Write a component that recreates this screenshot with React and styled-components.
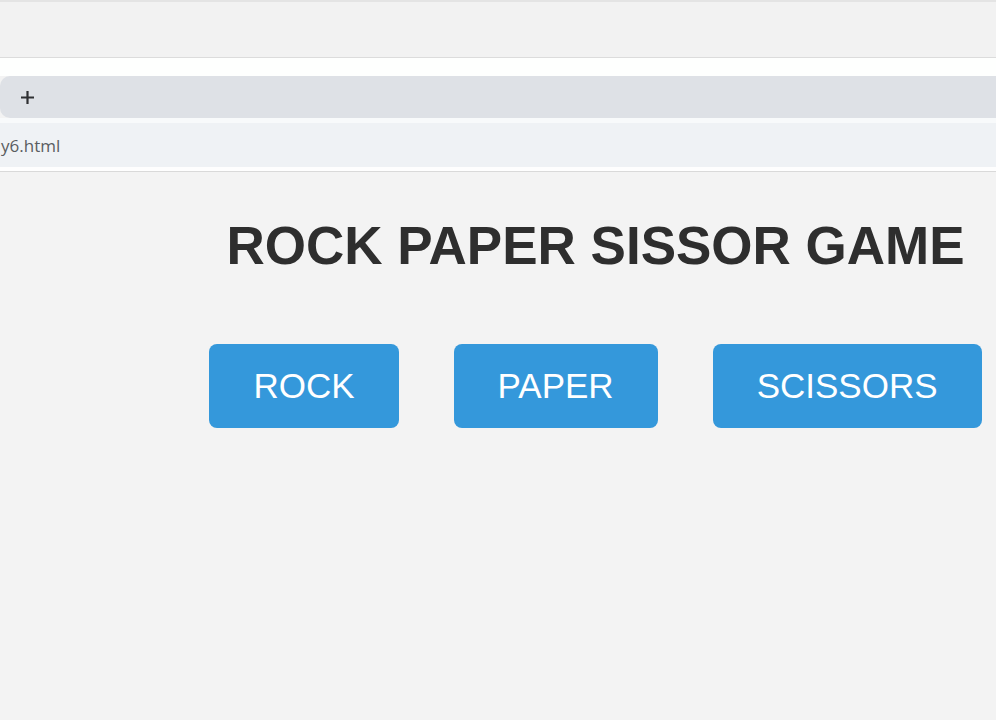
import React from 'react'
import styled, { createGlobalStyle } from 'styled-components';

const GlobalStyle = createGlobalStyle`
    html, body {
        margin: 0;
        padding: 0;
        background: #f3f3f3;
        font-family: "Liberation Sans", Arial, sans-serif;
    }
`;

const choices = ['ROCK', 'PAPER', 'SCISSORS'];

function App() {
  return (
    <>
        <GlobalStyle />
        <Chrome>
            <TopBand />
            <WhiteGap />
            <TabStrip>
                <PlusIcon viewBox="0 0 15 15">
                    <path d="M7.5 1v13M1 7.5h13" stroke="#2f3033" strokeWidth="2.2" fill="none" />
                </PlusIcon>
            </TabStrip>
            <ThinGap />
            <AddressBar>
                <Url>y6.html</Url>
            </AddressBar>
            <BottomGap />
        </Chrome>
        <Page>
            <Title>ROCK PAPER SISSOR GAME</Title>
            <ButtonRow>
                {choices.map(choice => (
                    <ChoiceButton key={choice}>{choice}</ChoiceButton>
                ))}
            </ButtonRow>
        </Page>
    </>
  )
}

const Chrome = styled.div`
    display: flex;
    flex-direction: column;
    border-bottom: 1px solid #d9d9d9;
`;

const TopBand = styled.div`
    height: 58px;
    box-sizing: border-box;
    background: #f2f2f2;
    border-top: 2px solid #e4e4e4;
    border-bottom: 1px solid #dcdcdc;
`;

const WhiteGap = styled.div`
    height: 18px;
    background: #fefffe;
`;

const TabStrip = styled.div`
    height: 42px;
    background: #dee1e6;
    border-radius: 10px 0 0 10px;
    display: flex;
    align-items: center;
    padding-left: 20px;
`;

const PlusIcon = styled.svg`
    width: 15px;
    height: 15px;
`;

const ThinGap = styled.div`
    height: 5px;
    background: #f8fafb;
`;

const AddressBar = styled.div`
    height: 44px;
    background: #eff2f5;
    display: flex;
    align-items: center;
    overflow: hidden;
`;

const Url = styled.span`
    font-family: "Open Sans", "Liberation Sans", sans-serif;
    font-size: 17px;
    color: #5a5d61;
    margin-left: 1px;
    white-space: nowrap;
`;

const BottomGap = styled.div`
    height: 4px;
    background: #fefefe;
`;

const Page = styled.main`
    padding-left: 195px;
    display: flex;
    flex-direction: column;
    align-items: center;
    padding-top: 43px;
`;

const Title = styled.h1`
    margin: 0;
    font-size: 53px;
    line-height: 61px;
    font-weight: bold;
    color: #2e2e2e;
    white-space: nowrap;
`;

const ButtonRow = styled.div`
    display: flex;
    gap: 55px;
    margin-top: 68px;
`;

const ChoiceButton = styled.button`
    height: 84px;
    padding: 0 44px;
    border: none;
    border-radius: 8px;
    background: #3498db;
    color: #ffffff;
    font-family: "Liberation Sans", Arial, sans-serif;
    font-size: 35px;
    cursor: pointer;
`;

export default App;
